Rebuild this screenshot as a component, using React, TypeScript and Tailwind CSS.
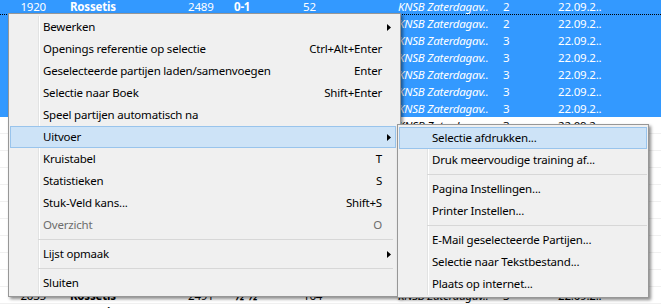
import clsx from "clsx";

// List rows behind the context menu
const rows = [
  { nr: "1920", name: "Rossetis", elo: "2489", res: "0-1", moves: "52", event: "KNSB Zaterdagav..", round: "2", date: "22.09.2.." },
  { nr: "1921", name: "Rossetis", elo: "2489", res: "1-0", moves: "41", event: "KNSB Zaterdagav..", round: "2", date: "22.09.2.." },
  { nr: "1987", name: "Rossetis", elo: "2491", res: "½-½", moves: "38", event: "KNSB Zaterdagav..", round: "3", date: "22.09.2.." },
  { nr: "1988", name: "Rossetis", elo: "2491", res: "0-1", moves: "67", event: "KNSB Zaterdagav..", round: "3", date: "22.09.2.." },
  { nr: "1989", name: "Rossetis", elo: "2491", res: "1-0", moves: "29", event: "KNSB Zaterdagav..", round: "3", date: "22.09.2.." },
  { nr: "1990", name: "Rossetis", elo: "2491", res: "½-½", moves: "44", event: "KNSB Zaterdagav..", round: "3", date: "22.09.2.." },
  { nr: "1991", name: "Rossetis", elo: "2491", res: "1-0", moves: "55", event: "KNSB Zaterdagav..", round: "3", date: "22.09.2.." },
  { nr: "2025", name: "Rossetis", elo: "2491", res: "0-1", moves: "36", event: "KNSB Zaterdagav..", round: "3", date: "22.09.2.." },
  { nr: "2026", name: "Rossetis", elo: "2491", res: "1-0", moves: "48", event: "KNSB Zaterdagav..", round: "3", date: "22.09.2.." },
  { nr: "2027", name: "Rossetis", elo: "2491", res: "½-½", moves: "30", event: "KNSB Zaterdagav..", round: "3", date: "22.09.2.." },
  { nr: "2028", name: "Rossetis", elo: "2491", res: "0-1", moves: "71", event: "KNSB Zaterdagav..", round: "3", date: "22.09.2.." },
  { nr: "2029", name: "Rossetis", elo: "2491", res: "1-0", moves: "26", event: "KNSB Zaterdagav..", round: "3", date: "22.09.2.." },
  { nr: "2030", name: "Rossetis", elo: "2491", res: "½-½", moves: "59", event: "KNSB Zaterdagav..", round: "3", date: "22.09.2.." },
  { nr: "2031", name: "Rossetis", elo: "2491", res: "1-0", moves: "33", event: "KNSB Zaterdagav..", round: "3", date: "22.09.2.." },
  { nr: "2032", name: "Rossetis", elo: "2491", res: "0-1", moves: "47", event: "KNSB Zaterdagav..", round: "3", date: "22.09.2.." },
  { nr: "2033", name: "Rossetis", elo: "2491", res: "½-½", moves: "62", event: "KNSB Zaterdagav..", round: "3", date: "22.09.2.." },
  { nr: "2034", name: "Rossetis", elo: "2491", res: "1-0", moves: "40", event: "KNSB Zaterdagav..", round: "3", date: "22.09.2.." },
  { nr: "2035", name: "Rossetis", elo: "2491", res: "½-½", moves: "164", event: "KNSB Zaterdagav..", round: "3", date: "22.09.2.." },
  { nr: "2036", name: "Rossetis", elo: "2491", res: "1-0", moves: "50", event: "KNSB Zaterdagav..", round: "3", date: "22.09.2.." },
];

type Entry =
  | { sep: true }
  | { sep?: false; label: string; shortcut?: string; arrow?: boolean; disabled?: boolean; active?: boolean };

const mainMenu: Entry[] = [
  { label: "Bewerken", arrow: true },
  { label: "Openings referentie op selectie", shortcut: "Ctrl+Alt+Enter" },
  { label: "Geselecteerde partijen laden/samenvoegen", shortcut: "Enter" },
  { label: "Selectie naar Boek", shortcut: "Shift+Enter" },
  { label: "Speel partijen automatisch na" },
  { label: "Uitvoer", arrow: true, active: true },
  { label: "Kruistabel", shortcut: "T" },
  { label: "Statistieken", shortcut: "S" },
  { label: "Stuk-Veld kans...", shortcut: "Shift+S" },
  { label: "Overzicht", shortcut: "O", disabled: true },
  { sep: true },
  { label: "Lijst opmaak", arrow: true },
  { sep: true },
  { label: "Sluiten" },
];

const subMenu: Entry[] = [
  { label: "Selectie afdrukken...", active: true },
  { label: "Druk meervoudige training af..." },
  { sep: true },
  { label: "Pagina Instellingen..." },
  { label: "Printer Instellen..." },
  { sep: true },
  { label: "E-Mail geselecteerde Partijen..." },
  { label: "Selectie naar Tekstbestand..." },
  { label: "Plaats op internet..." },
];

const Arrow = () => (
  <svg width="4" height="7" viewBox="0 0 4 7" className="absolute right-[9px] top-[8px]">
    <path d="M0 0 L4 3.5 L0 7 Z" fill="#000" />
  </svg>
);

const Menu = ({ items, className, hlRight, sepRight }: { items: Entry[]; className: string; hlRight: string; sepRight: string }) => (
  <div className={clsx("absolute border border-[#979797] bg-[#f0f0f0] py-[2px] shadow-[2px_2px_3px_rgba(0,0,0,0.45)]", className)}>
    <div className="absolute inset-y-[2px] left-[29px] w-[2px] border-l border-[#e2e3e3] bg-white" />
    {items.map((it, i) =>
      it.sep ? (
        <div key={i} className="relative flex h-[7px] items-center">
          <div className={clsx("ml-[29px] h-px flex-1 bg-[#d7d7d7]", sepRight)} />
        </div>
      ) : (
        <div key={i} className={clsx("relative flex h-[22px] items-center", it.disabled ? "text-[#6d6d6d]" : "text-black")}>
          {it.active && (
            <div className={clsx("absolute inset-y-0 left-[1px] border border-[#99c4ec] bg-[#cde3f7]", hlRight)} />
          )}
          <span className="relative flex-1 pl-[34px]">{it.label}</span>
          {it.shortcut && <span className="relative pr-[18px]">{it.shortcut}</span>}
          {it.arrow && <Arrow />}
        </div>
      )
    )}
  </div>
);

export default function App() {
  return (
    <div className="relative h-[308px] w-[661px] overflow-hidden bg-white font-['Noto_Sans',sans-serif] text-[11.5px] tracking-[-0.2px]">
      <div className="-mt-[2px]">
        {rows.map((r, i) => {
          const sel = i < 7;
          return (
            <div
              key={r.nr}
              className={clsx(
                "flex h-[17px] items-center leading-[17px] whitespace-nowrap",
                sel ? "bg-[#3399ff] text-white" : "border-b border-[#f0f0f0] text-black",
                i === 0 && "border-b border-dotted border-black"
              )}
            >
              <div className="w-[46px] text-right">{r.nr}</div>
              <div className="w-[142px] pl-[24px] font-bold">{r.name}</div>
              <div className="w-[46px]">{r.elo}</div>
              <div className="w-[69px] font-bold">{r.res}</div>
              <div className="w-[95px]">{r.moves}</div>
              <div className="w-[105px] italic">{r.event}</div>
              <div className="w-[55px]">{r.round}</div>
              <div>{r.date}</div>
            </div>
          );
        })}
      </div>

      <Menu items={mainMenu} className="left-[8px] top-[13px] w-[393px]" hlRight="right-[4px]" sepRight="mr-[7px]" />
      <Menu items={subMenu} className="left-[397px] top-[124px] w-[252px]" hlRight="right-[1px]" sepRight="mr-[1px]" />
    </div>
  );
}
